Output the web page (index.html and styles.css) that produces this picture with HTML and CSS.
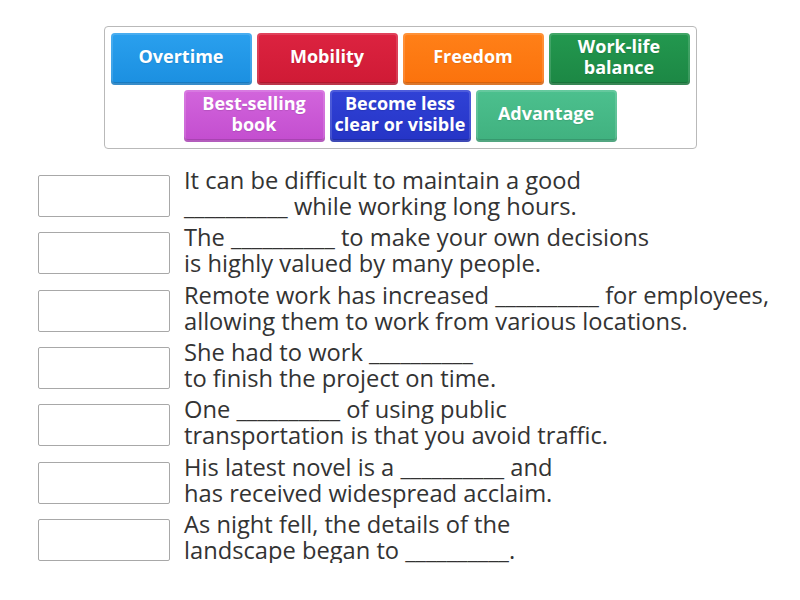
FILE: index.html
```html
<!DOCTYPE html>
<html lang="en">
<head>
  <meta charset="UTF-8">
  <title>Match up</title>
  <meta name="viewport" content="width=device-width, initial-scale=1">
  <link rel="stylesheet" href="styles.css">
</head>
<body>
  <!-- Word bank -->
  <div class="bank">
    <div class="bank-row">
      <div class="tile blue">Overtime</div>
      <div class="tile red">Mobility</div>
      <div class="tile orange">Freedom</div>
      <div class="tile green">Work-life<br>balance</div>
    </div>
    <div class="bank-row">
      <div class="tile pink">Best-selling<br>book</div>
      <div class="tile navy">Become less<br>clear or visible</div>
      <div class="tile mint">Advantage</div>
    </div>
  </div>

  <!-- Sentences with drop slots -->
  <div class="questions">
    <div class="question">
      <div class="slot"></div>
      <div class="sentence">It can be difficult to maintain a good<br>__________ while working long hours.</div>
    </div>
    <div class="question">
      <div class="slot"></div>
      <div class="sentence">The __________ to make your own decisions<br>is highly valued by many people.</div>
    </div>
    <div class="question">
      <div class="slot"></div>
      <div class="sentence">Remote work has increased __________ for employees,<br>allowing them to work from various locations.</div>
    </div>
    <div class="question">
      <div class="slot"></div>
      <div class="sentence">She had to work __________<br>to finish the project on time.</div>
    </div>
    <div class="question">
      <div class="slot"></div>
      <div class="sentence">One __________ of using public<br>transportation is that you avoid traffic.</div>
    </div>
    <div class="question">
      <div class="slot"></div>
      <div class="sentence">His latest novel is a __________ and<br>has received widespread acclaim.</div>
    </div>
    <div class="question">
      <div class="slot"></div>
      <div class="sentence">As night fell, the details of the<br>landscape began to __________.</div>
    </div>
  </div>
</body>
</html>
```

FILE: styles.css
```css
body {
  margin: 0;
  padding-top: 26px;
  font-family: "Open Sans", "Liberation Sans", sans-serif;
  background: #fff;
  color: #333;
}

/* ====== Word bank ====== */
.bank {
  width: 579px;
  margin: 0 auto;
  padding: 6px;
  border: 1px solid #b9b9b9;
  border-radius: 4px;
  display: flex;
  flex-direction: column;
  gap: 5px;
}
.bank-row {
  display: flex;
  justify-content: center;
  gap: 5px;
}
.tile {
  width: 141px;
  height: 52px;
  box-sizing: border-box;
  padding-bottom: 5px;
  border-radius: 4px;
  display: flex;
  align-items: center;
  justify-content: center;
  text-align: center;
  color: #fff;
  font-weight: 700;
  font-size: 18px;
  line-height: 21px;
  box-shadow:
    inset 0 0 0 2px rgba(255, 255, 255, 0.14),
    inset 0 -3px 0 rgba(0, 0, 0, 0.14);
  text-shadow: 0 1px 1px rgba(0, 0, 0, 0.1);
}
.tile.blue   { background: linear-gradient(#2aa0ee, #1b8fe0); }
.tile.red    { background: linear-gradient(#dc2340, #cf1a35); }
.tile.orange { background: linear-gradient(#ff8018, #fb720c); }
.tile.green  { background: linear-gradient(#23984f, #1c8744); }
.tile.pink   { background: linear-gradient(#d265dc, #c34dcf); }
.tile.navy   { background: linear-gradient(#3042d6, #2534c6); }
.tile.mint   { background: linear-gradient(#4cc08e, #40b17f); }

/* ====== Sentences ====== */
.questions {
  padding: 18px 0 0 38px;
  display: flex;
  flex-direction: column;
  gap: 5.33px;
}
.question {
  display: flex;
  align-items: flex-start;
  gap: 14px;
}
.slot {
  width: 130px;
  height: 40px;
  margin-top: 8px;
  border: 1px solid #a8a8a8;
  border-radius: 2px;
  background: #fff;
  flex-shrink: 0;
}
.sentence {
  font-size: 23.7px;
  line-height: 26px;
  white-space: nowrap;
}
```
